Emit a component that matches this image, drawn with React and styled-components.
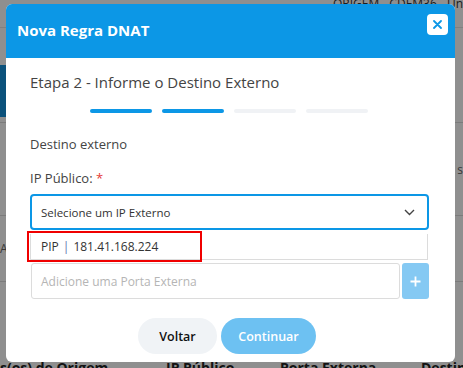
import React from "react";
import styled, { createGlobalStyle } from "styled-components";

const Global = createGlobalStyle`
  html, body { margin: 0; padding: 0; }
  body {
    font-family: "Open Sans", "Liberation Sans", sans-serif;
    background: #fff;
  }
`;

const Screen = styled.div`
  position: relative;
  width: 463px;
  height: 368px;
  overflow: hidden;
  background: #fff;
`;

/* dimmed page behind the modal */
const Page = styled.div`
  display: flex;
  flex-direction: column;
  height: 100%;
`;

const TopBar = styled.div`
  height: 27px;
  border-bottom: 1px solid #e4e4e4;
  display: flex;
  align-items: flex-start;
  padding-left: 333px;
  font-size: 12px;
  color: #333;
  line-height: 8px;
  white-space: nowrap;
  overflow: hidden;
`;

const BlueStrip = styled.div`
  margin-top: 37px;
  height: 52px;
  width: 40px;
  background: #1490dc;
`;

const Row = styled.div`
  height: ${p => p.$h}px;
  border-bottom: 1px solid #dcdcdc;
  display: flex;
  align-items: center;
  justify-content: ${p => p.$end ? "flex-end" : "flex-start"};
  font-size: 12px;
  color: #666;
`;

const HeadRow = styled.div`
  margin-top: auto;
  display: flex;
  height: 14px;
  font-weight: 700;
  font-size: 14px;
  color: #222;
  white-space: nowrap;
  line-height: 28px;
`;

const HeadCell = styled.div`
  width: ${p => p.$w}px;
  flex-shrink: 0;
`;

const Overlay = styled.div`
  position: absolute;
  inset: 0;
  background: rgba(0, 0, 0, 0.44);
  padding: 4px 8px 0 6px;
`;

const Modal = styled.div`
  width: 449px;
  height: 358px;
  background: #fff;
  border-radius: 6px;
  overflow: hidden;
  display: flex;
  flex-direction: column;
`;

const Header = styled.div`
  height: 51px;
  background: #0c97e6;
  display: flex;
  align-items: center;
  justify-content: space-between;
  padding: 0 7px 3px 11px;
`;

const Title = styled.h1`
  margin: 0;
  font-size: 15px;
  font-weight: 700;
  color: #fff;
`;

const CloseBtn = styled.button`
  width: 21px;
  height: 21px;
  border: none;
  border-radius: 4px;
  background: #fff;
  display: flex;
  align-items: center;
  justify-content: center;
  padding: 0;
  margin-bottom: 10px;
`;

const Body = styled.div`
  padding: 13px 26px 0 24px;
  display: flex;
  flex-direction: column;
`;

const StepTitle = styled.h2`
  margin: 0;
  font-size: 15px;
  font-weight: 400;
  color: #444;
  line-height: 22px;
`;

const Steps = styled.div`
  display: flex;
  justify-content: center;
  gap: 10px;
  margin-top: 16px;
  padding-right: 2px;
`;

const Step = styled.div`
  width: 62px;
  height: 4px;
  border-radius: 2px;
  background: ${p => p.$on ? "#0c97e6" : "#f0f2f5"};
`;

const Section = styled.div`
  margin-top: 21px;
  font-size: 13px;
  color: #444;
  line-height: 20px;
`;

const Label = styled.div`
  margin-top: 14px;
  font-size: 13px;
  color: #444;
  line-height: 20px;
  span { color: #e53935; }
`;

const Select = styled.div`
  margin-top: 6px;
  height: 36px;
  box-sizing: border-box;
  border: 2px solid #0c97e6;
  border-radius: 4px;
  display: flex;
  align-items: center;
  justify-content: space-between;
  padding: 0 12px 0 9px;
  font-size: 11.5px;
  color: #333;
`;

const Option = styled.div`
  position: relative;
  margin-top: 4px;
  height: 26px;
  box-sizing: border-box;
  border: 1px solid #dcdcdc;
  border-top: none;
  display: flex;
  align-items: center;
  padding-left: 10px;
  font-size: 12px;
  color: #333;
  margin-right: 1px;
  i { font-style: normal; color: #5a6fb0; margin: 0 4px; }
`;

const Mark = styled.div`
  position: absolute;
  left: -4px;
  top: -3px;
  width: 175px;
  height: 31px;
  box-sizing: border-box;
  border: 2.5px solid #f00000;
`;

const InputRow = styled.div`
  display: flex;
  margin-top: 3px;
  margin-left: 1px;
  height: 36px;
  gap: 2px;
`;

const Input = styled.div`
  flex: 1;
  box-sizing: border-box;
  border: 1px solid #dcdcdc;
  border-radius: 3px;
  display: flex;
  align-items: center;
  padding-left: 9px;
  font-size: 12px;
  color: #b5b5b5;
`;

const AddBtn = styled.div`
  width: 27px;
  background: #85c9f3;
  border-radius: 3px;
  display: flex;
  align-items: center;
  justify-content: center;
`;

const Actions = styled.div`
  display: flex;
  justify-content: center;
  gap: 4px;
  margin-top: 19px;
  padding-right: 5px;
`;

const Btn = styled.button`
  height: 36px;
  width: ${p => p.$w}px;
  border: none;
  border-radius: 18px;
  background: ${p => p.$primary ? "#6dc1f2" : "#f0f3f6"};
  color: ${p => p.$primary ? "#fff" : "#111"};
  font-family: "Open Sans", "Liberation Sans", sans-serif;
  font-size: 12.5px;
  font-weight: 600;
`;

export default function App() {
  return (
    <Screen>
      <Global />
      <Page>
        <TopBar>ORIGEM - CDEM36 - Universidade</TopBar>
        <BlueStrip />
        <Row $h={5} />
        <Row $h={92} $end>s</Row>
        <Row $h={65}>A</Row>
        <HeadRow>
          <HeadCell $w={166}>s(os) de Origem</HeadCell>
          <HeadCell $w={114}>IP Público</HeadCell>
          <HeadCell $w={141}>Porta Externa</HeadCell>
          <HeadCell $w={80}>Destino</HeadCell>
        </HeadRow>
      </Page>
      <Overlay>
        <Modal>
          <Header>
            <Title>Nova Regra DNAT</Title>
            <CloseBtn aria-label="Fechar">
              <svg width="9" height="9" viewBox="0 0 9 9">
                <path d="M1 1 L8 8 M8 1 L1 8" stroke="#0c97e6" strokeWidth="1.8" strokeLinecap="round" />
              </svg>
            </CloseBtn>
          </Header>
          <Body>
            <StepTitle>Etapa 2 - Informe o Destino Externo</StepTitle>
            <Steps>
              <Step $on />
              <Step $on />
              <Step />
              <Step />
            </Steps>
            <Section>Destino externo</Section>
            <Label>IP Público: <span>*</span></Label>
            <Select>
              Selecione um IP Externo
              <svg width="11" height="7" viewBox="0 0 11 7">
                <path d="M1 1 L5.5 5.5 L10 1" fill="none" stroke="#444" strokeWidth="1.4" />
              </svg>
            </Select>
            <Option>
              PIP<i>|</i>181.41.168.224
              <Mark />
            </Option>
            <InputRow>
              <Input>Adicione uma Porta Externa</Input>
              <AddBtn>
                <svg width="11" height="11" viewBox="0 0 11 11">
                  <path d="M5.5 0.5 V10.5 M0.5 5.5 H10.5" stroke="#fff" strokeWidth="1.8" />
                </svg>
              </AddBtn>
            </InputRow>
            <Actions>
              <Btn $w={79}>Voltar</Btn>
              <Btn $w={95} $primary>Continuar</Btn>
            </Actions>
          </Body>
        </Modal>
      </Overlay>
    </Screen>
  );
}
